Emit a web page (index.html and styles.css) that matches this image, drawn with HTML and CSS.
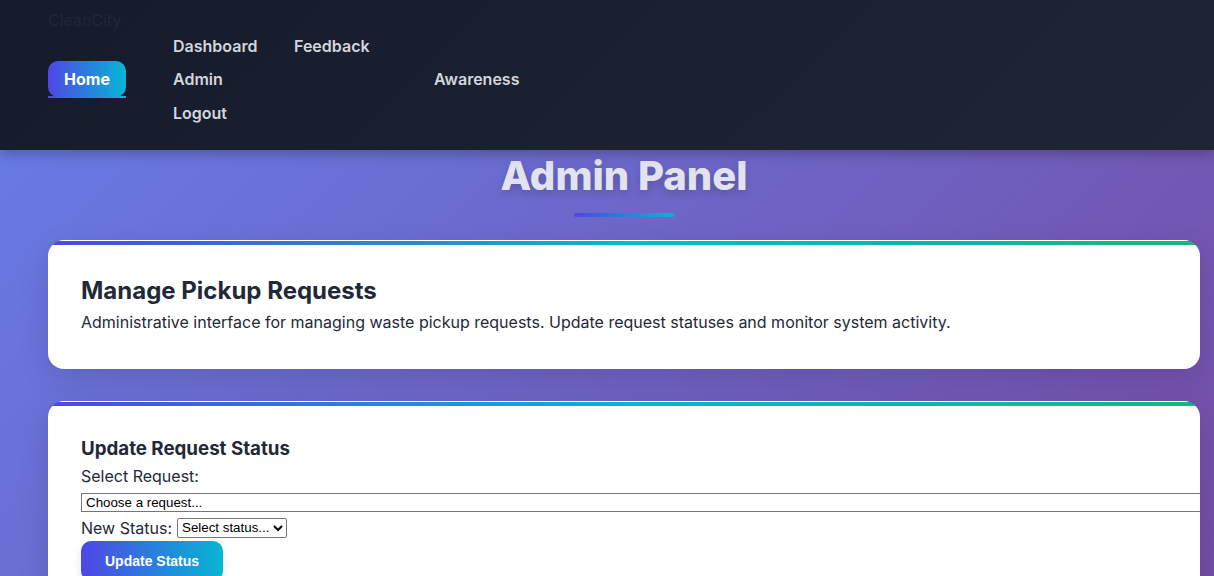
FILE: index.html
```html
<!DOCTYPE html>
<html lang="en">
<head>
<meta charset="utf-8">
<title>CleanCity - Admin</title>
<link rel="stylesheet" href="styles.css">
</head>
<body>
<header class="site-header">
  <div class="logo">CleanCity</div>
  <nav class="nav">
    <a class="nav-link nav-home" href="#">Home</a>
    <a class="nav-link nav-dashboard" href="#">Dashboard</a>
    <a class="nav-link nav-feedback" href="#">Feedback</a>
    <a class="nav-link nav-admin" href="#">Admin</a>
    <a class="nav-link nav-awareness" href="#">Awareness</a>
    <a class="nav-link nav-logout" href="#">Logout</a>
  </nav>
</header>
<main class="main">
  <h1 class="page-title">Admin Panel</h1>
  <div class="title-bar"></div>
  <section class="card card-intro">
    <h2 class="card-heading">Manage Pickup Requests</h2>
    <p class="card-text">Administrative interface for managing waste pickup requests. Update request statuses and monitor system activity.</p>
  </section>
  <section class="card card-form">
    <h3 class="form-heading">Update Request Status</h3>
    <label class="form-label" for="req">Select Request:</label>
    <select id="req" class="select-wide"><option>Choose a request...</option></select>
    <div class="status-row">
      <label class="form-label-inline" for="st">New Status:</label>
      <select id="st" class="select-small"><option>Select status...</option></select>
    </div>
    <button class="btn-primary" type="button">Update Status</button>
  </section>
</main>
</body>
</html>
```
FILE: styles.css
```css
* { box-sizing: border-box; }
html, body { margin: 0; padding: 0; }
body {
  font-family: Inter, "Noto Sans", sans-serif;
  background: linear-gradient(135deg, #667eea 0%, #764ba2 100%);
  min-height: 576px;
  overflow: hidden;
  color: #1f2937;
}
.site-header {
  height: 150px;
  background: linear-gradient(135deg, #151b2b 0%, #1e2636 100%);
  padding: 9px 0 0 48px;
  box-shadow: 0 4px 12px rgba(0,0,0,0.25);
  position: relative;
  z-index: 2;
}
.logo {
  font-size: 16px;
  line-height: 20px;
  color: #1f2838;
  font-weight: 400;
  margin-top: 1px;
  margin-bottom: -1px;
}
.nav {
  display: grid;
  grid-template-columns: 78px 47px 121px 140px auto;
  grid-template-rows: 33px 34px 33px;
  align-items: center;
}
.nav-link {
  color: #d3d6de;
  font-weight: 600;
  font-size: 16px;
  line-height: 20px;
  text-decoration: none;
  white-space: nowrap;
}
.nav-dashboard { grid-column: 3; grid-row: 1; }
.nav-feedback { grid-column: 4; grid-row: 1; }
.nav-admin { grid-column: 3; grid-row: 2; }
.nav-awareness { grid-column: 5; grid-row: 2; }
.nav-logout { grid-column: 3; grid-row: 3; }
.nav-home {
  grid-column: 1; grid-row: 2;
  position: relative;
  display: block;
  text-align: center;
  color: #ffffff;
  font-weight: 700;
  padding: 8px 0;
  height: 36px;
  border-radius: 10px;
  background: linear-gradient(90deg, #4f46e5 0%, #06b6d4 100%);
}
.nav-home::after {
  content: "";
  position: absolute;
  left: 0; right: 0; bottom: -1px;
  height: 2px;
  background: linear-gradient(90deg, #4f46e5 0%, #06b6d4 100%);
}
.main {
  padding: 2px 14px 40px 48px;
}
.page-title {
  margin: 0;
  text-align: center;
  font-size: 40px;
  line-height: 48px;
  font-weight: 800;
  letter-spacing: 0;
  color: #e1e3ef;
  text-shadow: 0 4px 8px rgba(0,0,0,0.18);
}
.title-bar {
  width: 100px;
  height: 4px;
  margin: 13px auto 23px;
  border-radius: 2px;
  background: linear-gradient(90deg, #4f46e5 0%, #06b6d4 100%);
}
.card {
  background:
    linear-gradient(90deg, #4f46e5 0%, #06b6d4 50%, #10b981 100%) 0 1px / 100% 4px no-repeat,
    #ffffff;
  border-radius: 16px;
  box-shadow: 0 10px 30px rgba(0,0,0,0.12);
  overflow: hidden;
}
.card-intro {
  padding: 36px 33px 35px;
  margin-bottom: 32px;
}
.card-heading {
  margin: 0 0 4px;
  font-size: 24px;
  line-height: 30px;
  font-weight: 700;
  color: #1f2937;
}
.card-text {
  margin: 0;
  font-size: 16px;
  line-height: 24px;
  color: #1f2937;
}
.card-form {
  padding: 36px 33px 0;
  height: 200px;
}
.form-heading {
  margin: 0 0 3px;
  font-size: 18.72px;
  line-height: 24px;
  font-weight: 700;
  color: #1f2937;
}
.form-label {
  display: block;
  font-size: 16px;
  line-height: 24px;
  margin-bottom: 5px;
}
.select-wide {
  display: block;
  width: calc(100% + 80px);
  height: 19px;
  font-family: "Liberation Sans", Arial, sans-serif;
  font-size: 13.33px;
  padding: 0;
  border: 1px solid #767676;
  border-radius: 0;
  background: #fff;
  color: #000;
}
.status-row {
  display: flex;
  align-items: center;
  gap: 5px;
  height: 27px;
  margin-top: 2px;
}
.form-label-inline {
  font-size: 16px;
  line-height: 24px;
}
.select-small {
  font-family: "Liberation Sans", Arial, sans-serif;
  font-size: 13.33px;
  height: 20px;
  border: 1px solid #767676;
  border-radius: 2px;
  background: #fff;
  color: #000;
}
.btn-primary {
  display: block;
  font-family: "Liberation Sans", Arial, sans-serif;
  font-weight: 700;
  font-size: 14px;
  color: #ffffff;
  border: none;
  padding: 12px 24px;
  line-height: 16px;
  border-radius: 10px;
  background: linear-gradient(90deg, #4f46e5 0%, #06b6d4 100%);
  box-shadow: 0 4px 10px rgba(0,0,0,0.1);
}
```
